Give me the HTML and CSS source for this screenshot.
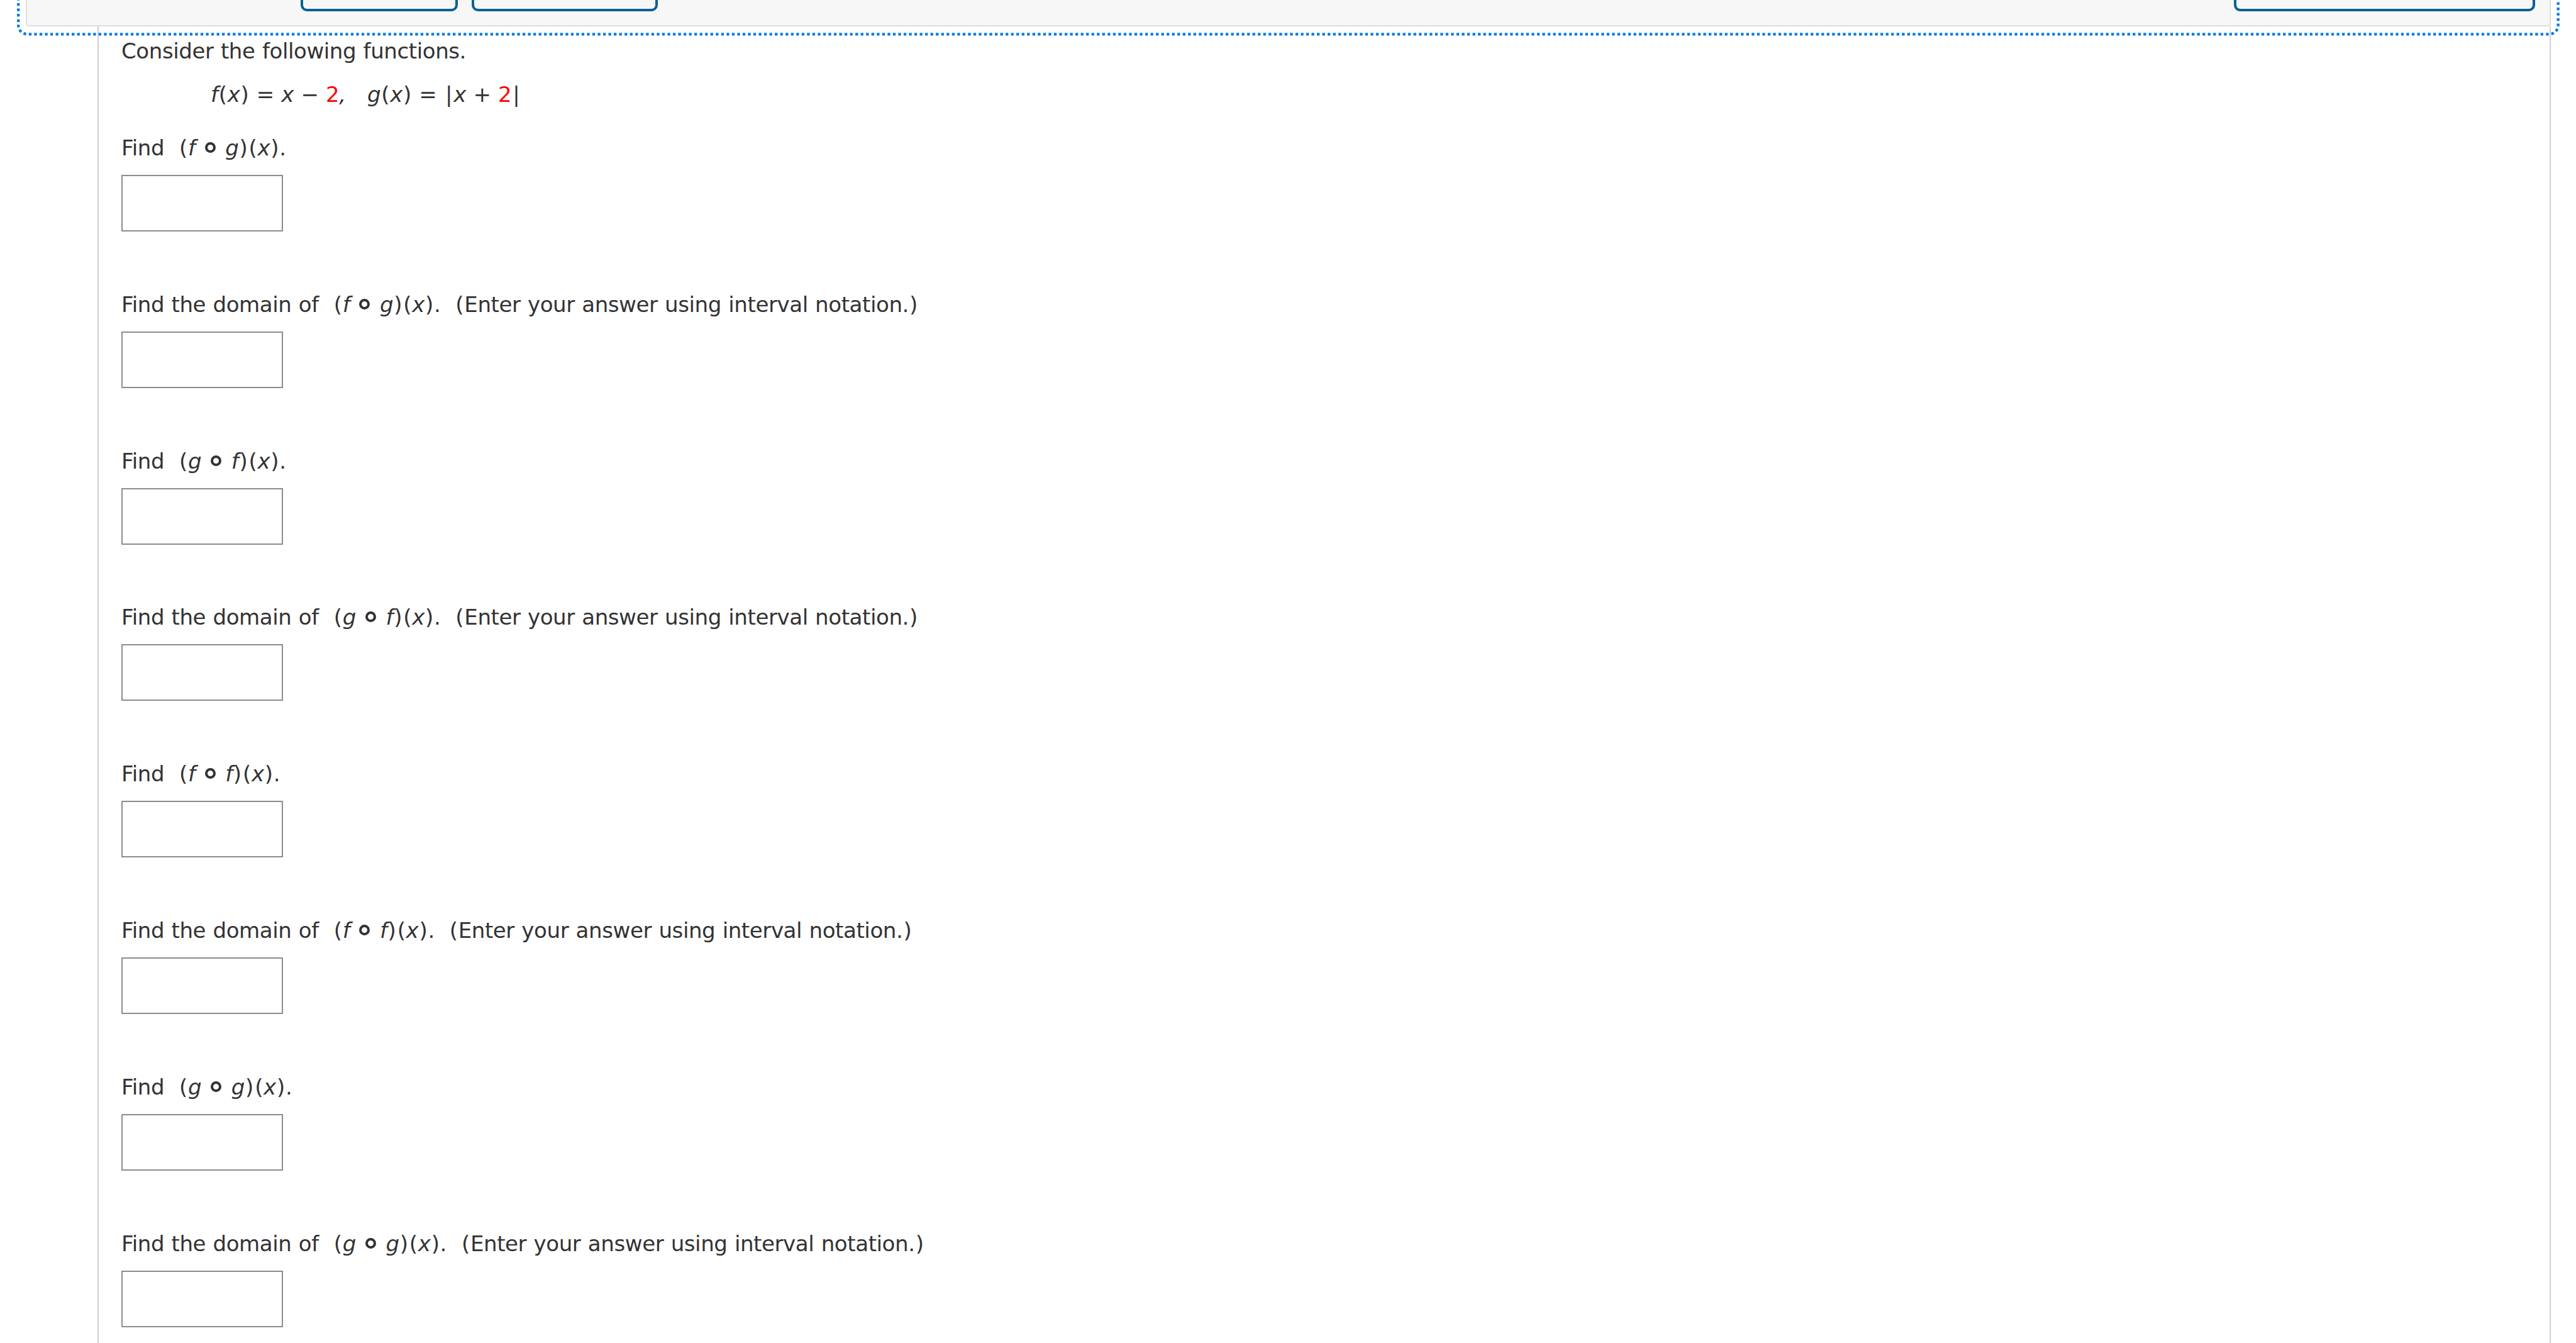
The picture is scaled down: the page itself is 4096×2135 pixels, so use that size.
FILE: index.html
```
<!DOCTYPE html>
<html lang="en">
<head>
    <meta charset="utf-8">
    <title>Composition of Functions</title>
    <link rel="stylesheet" href="styles.css">
</head>
<body>
<div class="toolbar">
    <div class="btn btn-first"></div>
    <div class="btn btn-second"></div>
    <div class="btn btn-last"></div>
</div>
<svg class="focus-ring" width="4096" height="70">
    <path d="M29.2 -3.5 V40.3 A14 14 0 0 0 43.2 54.3 H4053.6 A14 14 0 0 0 4067.6 40.3 V-4"/>
</svg>

<div class="question">
    <p class="intro">Consider the following functions.</p>
    <p class="formula"><i>f</i><span class="par">(</span><i>x</i><span class="par">)</span> = <i>x</i> − <b>2</b><i>,</i>&nbsp;&nbsp; <i>g</i><span class="par">(</span><i>x</i><span class="par">)</span> = <span class="bar">|</span><i>x</i> + <b>2</b><span class="bar">|</span></p>

    <div class="part">
        <p>Find &nbsp;<span class="par">(</span><i>f</i> <span class="comp"></span> <i>g</i><span class="par">)</span><span class="par">(</span><i>x</i><span class="par">)</span>.</p>
        <div class="answer"></div>
    </div>
    <div class="part">
        <p>Find the domain of &nbsp;<span class="par">(</span><i>f</i> <span class="comp"></span> <i>g</i><span class="par">)</span><span class="par">(</span><i>x</i><span class="par">)</span>. &nbsp;<span class="par">(</span>Enter your answer using interval notation.<span class="par">)</span></p>
        <div class="answer"></div>
    </div>
    <div class="part">
        <p>Find &nbsp;<span class="par">(</span><i>g</i> <span class="comp"></span> <i>f</i><span class="par">)</span><span class="par">(</span><i>x</i><span class="par">)</span>.</p>
        <div class="answer"></div>
    </div>
    <div class="part">
        <p>Find the domain of &nbsp;<span class="par">(</span><i>g</i> <span class="comp"></span> <i>f</i><span class="par">)</span><span class="par">(</span><i>x</i><span class="par">)</span>. &nbsp;<span class="par">(</span>Enter your answer using interval notation.<span class="par">)</span></p>
        <div class="answer"></div>
    </div>
    <div class="part">
        <p>Find &nbsp;<span class="par">(</span><i>f</i> <span class="comp"></span> <i>f</i><span class="par">)</span><span class="par">(</span><i>x</i><span class="par">)</span>.</p>
        <div class="answer"></div>
    </div>
    <div class="part">
        <p>Find the domain of &nbsp;<span class="par">(</span><i>f</i> <span class="comp"></span> <i>f</i><span class="par">)</span><span class="par">(</span><i>x</i><span class="par">)</span>. &nbsp;<span class="par">(</span>Enter your answer using interval notation.<span class="par">)</span></p>
        <div class="answer"></div>
    </div>
    <div class="part">
        <p>Find &nbsp;<span class="par">(</span><i>g</i> <span class="comp"></span> <i>g</i><span class="par">)</span><span class="par">(</span><i>x</i><span class="par">)</span>.</p>
        <div class="answer"></div>
    </div>
    <div class="part">
        <p>Find the domain of &nbsp;<span class="par">(</span><i>g</i> <span class="comp"></span> <i>g</i><span class="par">)</span><span class="par">(</span><i>x</i><span class="par">)</span>. &nbsp;<span class="par">(</span>Enter your answer using interval notation.<span class="par">)</span></p>
        <div class="answer"></div>
    </div>
</div>
</body>
</html>
```

FILE: styles.css
```
* {
    box-sizing: border-box;
}
body {
    margin: 0;
    height: 2135px;
    overflow: hidden;
    background: white;
    color: #333;
    font-family: Verdana, "DejaVu Sans", sans-serif;
    font-size: 34px;
    line-height: 44px;
    letter-spacing: -0.4px;
    word-spacing: 1px;
}
p {
    margin: 0;
    white-space: nowrap;
}
.toolbar {
    display: flex;
    height: 42px;
    margin: 0 40px 0 41px;
    padding-left: 435px;
    background: #f7f7f7;
    border: 2px solid #ddd;
    border-top: none;
    border-radius: 0 0 5px 5px;
}
.btn {
    height: 18px;
    border: 4px solid #006298;
    border-top: none;
    border-radius: 0 0 10px 10px;
}
.btn-first {
    width: 250px;
}
.btn-second {
    width: 296px;
    margin-left: 22px;
}
.btn-last {
    width: 479px;
    margin-left: auto;
    margin-right: 23px;
}
.focus-ring {
    position: absolute;
    top: 0;
    left: 0;
}
.focus-ring path {
    fill: none;
    stroke: #0078e7;
    stroke-width: 4.3;
    stroke-dasharray: 4.267 4.267;
}
.question {
    height: 2093px;
    margin: 0 40px 0 155px;
    padding: 17px 0 0 36px;
    border-left: 2px solid #d0d0d0;
    border-right: 2px solid #d0d0d0;
}
.formula {
    margin-top: 25px;
    padding-left: 142px;
}
.formula b {
    color: red;
    font-weight: normal;
}
.par {
    padding: 0 1.1px;
}
.bar {
    padding: 0 2.2px;
}
.part {
    height: 248.8px;
}
.formula + .part {
    margin-top: 41px;
}
.comp {
    display: inline-block;
    width: 17px;
    height: 17px;
    margin: 0 4px 0 3.8px;
    border: 4px solid #333;
    border-radius: 50%;
    vertical-align: 4px;
}
.answer {
    width: 257px;
    height: 90px;
    margin-top: 21px;
    border: 2px solid #8c8c8c;
}
```
